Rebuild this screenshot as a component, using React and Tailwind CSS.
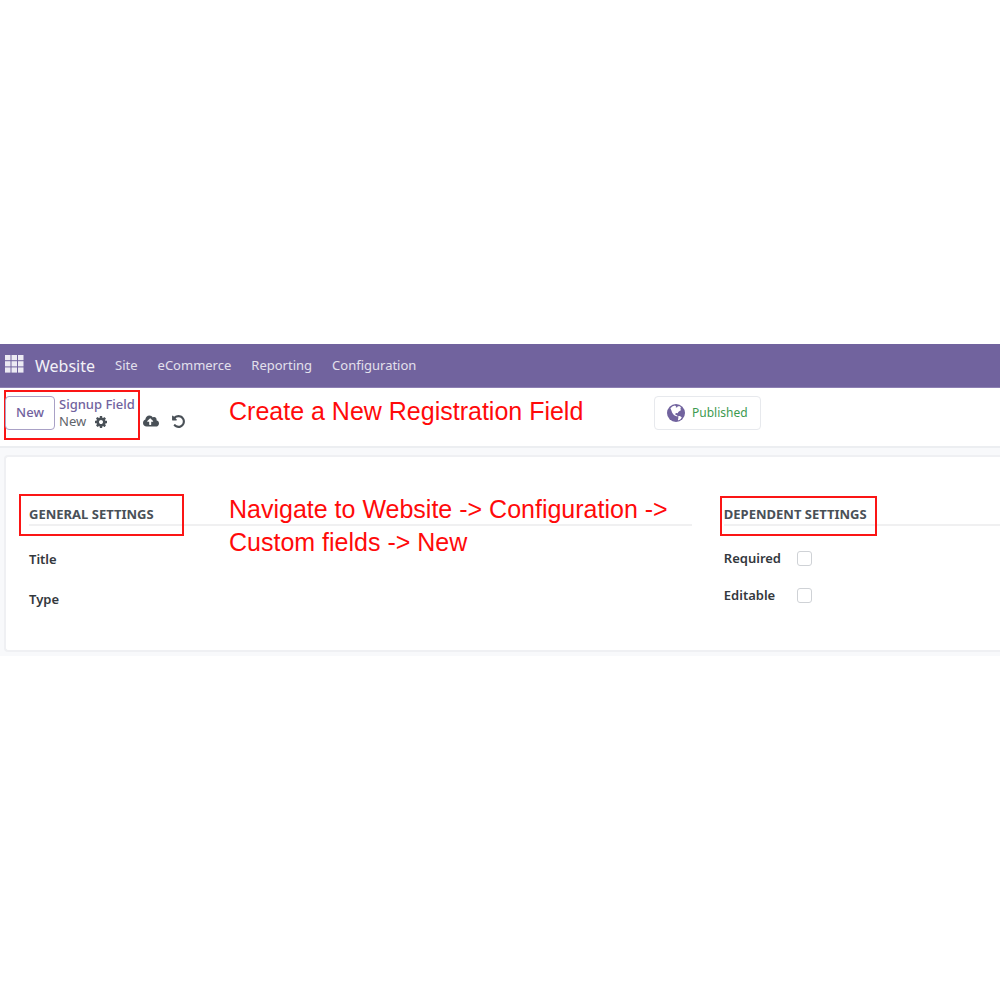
import React, { useState } from 'react'
import { FaCloudUploadAlt } from 'react-icons/fa'

const MENU_ITEMS = ['Site', 'eCommerce', 'Reporting', 'Configuration']

function AppsIcon() {
  return (
    <svg width="19" height="18" viewBox="0 0 19 18" fill="currentColor" aria-hidden="true">
      {[0, 6.2, 12.4].map((y) =>
        [0, 6.5, 13].map((x) => <rect key={`${x}-${y}`} x={x} y={y} width="5.5" height="5.2" />)
      )}
    </svg>
  )
}

function CogIcon() {
  return (
    <svg width="14" height="14" viewBox="0 0 1792 1792" fill="currentColor" aria-hidden="true">
      <path d="M1152 896q0-106-75-181t-181-75-181 75-75 181 75 181 181 75 181-75 75-181zm512-109v222q0 12-8 23t-20 13l-185 28q-19 54-39 91 35 50 107 138 10 12 10 25t-9 23q-27 37-99 108t-94 71q-12 0-26-9l-138-108q-44 23-91 38-16 136-29 186-7 28-36 28h-222q-14 0-24.5-8.5t-11.5-21.5l-28-184q-49-16-90-37l-141 107q-10 9-25 9-14 0-25-11-126-114-165-168-7-10-7-23 0-12 8-23 15-21 51-66.5t54-70.5q-27-50-41-99l-183-27q-13-2-21-12.5t-8-23.5v-222q0-12 8-23t19-13l186-28q14-46 39-92-40-57-107-138-10-12-10-24 0-10 9-23 26-36 98.5-107.5t94.5-71.5q13 0 26 10l138 107q44-23 91-38 16-136 29-186 7-28 36-28h222q14 0 24.5 8.5t11.5 21.5l28 184q49 16 90 37l142-107q9-9 24-9 13 0 25 10 129 119 165 170 7 8 7 22 0 12-8 23-15 21-51 66.5t-54 70.5q26 50 41 98l183 28q13 2 21 12.5t8 23.5z" />
    </svg>
  )
}

function UndoIcon() {
  return (
    <svg width="15" height="15" viewBox="0 0 1792 1792" fill="currentColor" aria-hidden="true">
      <path d="M1664 896q0 156-61 298t-164 245-245 164-298 61q-172 0-327-72.5t-264-204.5q-7-10-6.5-22.5t8.5-20.5l137-138q10-9 25-9 16 2 23 12 73 95 179 147t225 52q104 0 198.5-40.5t163.5-109.5 109.5-163.5 40.5-198.5-40.5-198.5-109.5-163.5-163.5-109.5-198.5-40.5q-98 0-188 35.5t-160 101.5l137 138q31 30 14 69-17 40-59 40h-448q-26 0-45-19t-19-45v-448q0-42 40-59 39-17 69 14l130 129q107-101 244.5-156.5t284.5-55.5q156 0 298 61t245 164 164 245 61 298z" />
    </svg>
  )
}

function GlobeIcon() {
  return (
    <svg width="18" height="18" viewBox="0 0 18 18" className="shrink-0" aria-hidden="true">
      <circle cx="9" cy="9" r="9" fill="#71639e" />
      <path
        fill="#fff"
        d="M3.4 4.3 5.6 2.3 8 1.5 9.2 2.4 8.6 3.3 10 3.6 10.8 2.2 12.9 2.3 14 3.7 13.2 4.9 14.2 6 12.6 7 11.3 8 10.7 9.3 9.3 9 8.2 9.7 8.7 11 10.1 11.3 10.6 12.6 9.5 12.3 7.6 11.5 6.2 10.2 5.1 8.5 4.4 6.6ZM11.1 12.2 12.8 11.9 14.8 13.2 13.8 15 11.5 16.5 10.9 15.4 11.4 14.1Z"
      />
    </svg>
  )
}

function Navbar() {
  return (
    <nav className="flex h-11 items-center border-b border-[#8d80b3] bg-[#71639e] pl-[5px] text-white">
      <button type="button" aria-label="Apps" className="-mt-1 text-[#eceaf3]">
        <AppsIcon />
      </button>
      <a href="#website" className="ml-[11px] text-base text-[#f3f1f7]">Website</a>
      <div className="ml-5 flex gap-5 text-[13px] text-[#e3e0ec]">
        {MENU_ITEMS.map((item) => (
          <a key={item} href={`#${item.toLowerCase()}`}>{item}</a>
        ))}
      </div>
    </nav>
  )
}

function ControlPanel() {
  return (
    <header className="flex h-[60px] items-start border-b-2 border-[#eceef1] bg-white pl-1 pt-0.5">
      {/* Breadcrumb */}
      <div className="flex h-[50px] w-[136px] shrink-0 items-start border-2 border-[#fb1515] pt-1">
        <button
          type="button"
          className="-ml-px h-[34px] w-[50px] shrink-0 rounded border border-[#a9a1c6] text-[13px] font-medium text-[#71639e]"
        >
          New
        </button>
        <div className="ml-1 whitespace-nowrap text-[13px] leading-[17px]">
          <a href="#signup-field" className="block font-medium text-[#71639e]">Signup Field</a>
          <div className="flex items-center gap-2 text-[#5f656b]">
            <span>New</span>
            <button type="button" aria-label="Actions" className="text-[#495057]">
              <CogIcon />
            </button>
          </div>
        </div>
      </div>
      <div className="ml-[3px] flex h-[62px] shrink-0 items-center gap-3 text-[#495057]">
        <button type="button" aria-label="Save"><FaCloudUploadAlt size={16} /></button>
        <button type="button" aria-label="Discard"><UndoIcon /></button>
      </div>
      <p className="ml-[43px] mt-[5px] w-[425px] shrink-0 font-['Liberation_Sans',sans-serif] text-[25px] leading-[33px] text-[#ff0a0a]">
        Create a New Registration Field
      </p>
      <button
        type="button"
        className="mt-1.5 flex h-[34px] w-[107px] shrink-0 items-center gap-[7px] rounded border border-[#e7e9ed] pl-3 text-xs text-[#3d9a50]"
      >
        <GlobeIcon />
        Published
      </button>
    </header>
  )
}

function GroupTitle({ children, frame }) {
  return (
    <h2 className="relative border-b-2 border-[#f0f0f1] text-[13px] font-bold leading-5 text-[#495057]">
      {children}
      <span className={`absolute border-2 border-[#fb1515] ${frame}`} />
    </h2>
  )
}

function CheckField({ id, label }) {
  const [checked, setChecked] = useState(false)
  return (
    <div className="flex h-[37px] items-center">
      <label htmlFor={id} className="w-[73px]">{label}</label>
      <input
        id={id}
        type="checkbox"
        checked={checked}
        onChange={(e) => setChecked(e.target.checked)}
        className="size-[15px] appearance-none rounded-[3px] border border-[#cfd2d6] bg-white checked:bg-[#71639e]"
      />
    </div>
  )
}

function FormSheet() {
  return (
    <main className="bg-[#f8f9fb] pb-1 pl-1 pt-[7px]">
      <div className="relative grid h-[197px] grid-cols-[12fr_5fr] gap-8 rounded-l border-2 border-r-0 border-[#eff0f3] bg-white pl-[23px] pt-[47px]">
        <section>
          <GroupTitle frame="-left-2.5 -top-2.5 h-[42px] w-[165px]">GENERAL SETTINGS</GroupTitle>
          <div className="pt-[13px] text-[13px] font-semibold leading-10 text-[#33383d]">
            <p>Title</p>
            <p>Type</p>
          </div>
        </section>
        <section>
          <GroupTitle frame="-left-1 -top-2 h-10 w-[157px]">DEPENDENT SETTINGS</GroupTitle>
          <div className="pt-[14px] text-[13px] font-semibold text-[#33383d]">
            <CheckField id="required" label="Required" />
            <CheckField id="editable" label="Editable" />
          </div>
        </section>
        <p className="absolute left-[223px] top-9 w-[450px] font-['Liberation_Sans',sans-serif] text-[25px] leading-[33px] text-[#ff0a0a]">
          Navigate to Website -&gt; Configuration -&gt; Custom fields -&gt; New
        </p>
      </div>
    </main>
  )
}

export default function App() {
  return (
    <div className="flex min-h-screen flex-col justify-center overflow-x-hidden bg-white font-['Noto_Sans','Open_Sans',sans-serif]">
      <Navbar />
      <ControlPanel />
      <FormSheet />
    </div>
  )
}
